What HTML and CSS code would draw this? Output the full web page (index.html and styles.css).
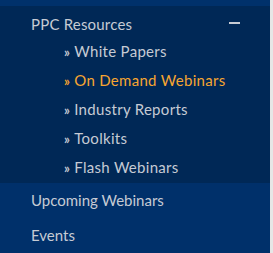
FILE: index.html
```html
<!DOCTYPE html>
<html>
<head>
<meta charset="utf-8">
<link rel="stylesheet" href="styles.css">
</head>
<body>
<nav class="menu">
  <div class="top-strip"></div>
  <div class="group">
    <div class="group-head">
      <span>PPC Resources</span>
      <span class="minus"></span>
    </div>
    <ul class="sub">
      <li><span class="raquo">»</span>White Papers</li>
      <li class="active"><span class="raquo">»</span>On Demand Webinars</li>
      <li><span class="raquo">»</span>Industry Reports</li>
      <li><span class="raquo">»</span>Toolkits</li>
      <li><span class="raquo">»</span>Flash Webinars</li>
    </ul>
  </div>
  <div class="item">Upcoming Webinars</div>
  <div class="item">Events</div>
</nav>
</body>
</html>
```

FILE: styles.css
```css
html, body {
  margin: 0;
  padding: 0;
  width: 273px;
  height: 253px;
  overflow: hidden;
  background: #e6e6e6;
}
.menu {
  width: 270px;
  height: 253px;
  background: #00306a;
  font-family: Lato, "Open Sans", sans-serif;
  font-size: 15px;
  color: #c6cbd4;
}
.top-strip {
  height: 6px;
  background: #00316b;
}
.group {
  background: #002856;
  padding: 8px 0 1px 0;
}
.group-head {
  display: flex;
  justify-content: space-between;
  align-items: center;
  padding: 0 30px 0 31px;
  height: 20px;
  margin-bottom: 3px;
  letter-spacing: 0.2px;
}
.minus {
  width: 11px;
  height: 1.5px;
  background: #c6cbd4;
  margin-top: -2px;
}
.sub {
  list-style: none;
  margin: 0;
  padding: 0 0 0 64px;
}
.sub li {
  height: 29px;
  line-height: 29px;
  letter-spacing: 0.3px;
}
.raquo {
  margin-right: 4px;
  font-size: 13px;
  font-weight: 700;
}
.sub li.active {
  color: #f6a531;
}
.item {
  padding-left: 31px;
  height: 35px;
  line-height: 35px;
}
```
